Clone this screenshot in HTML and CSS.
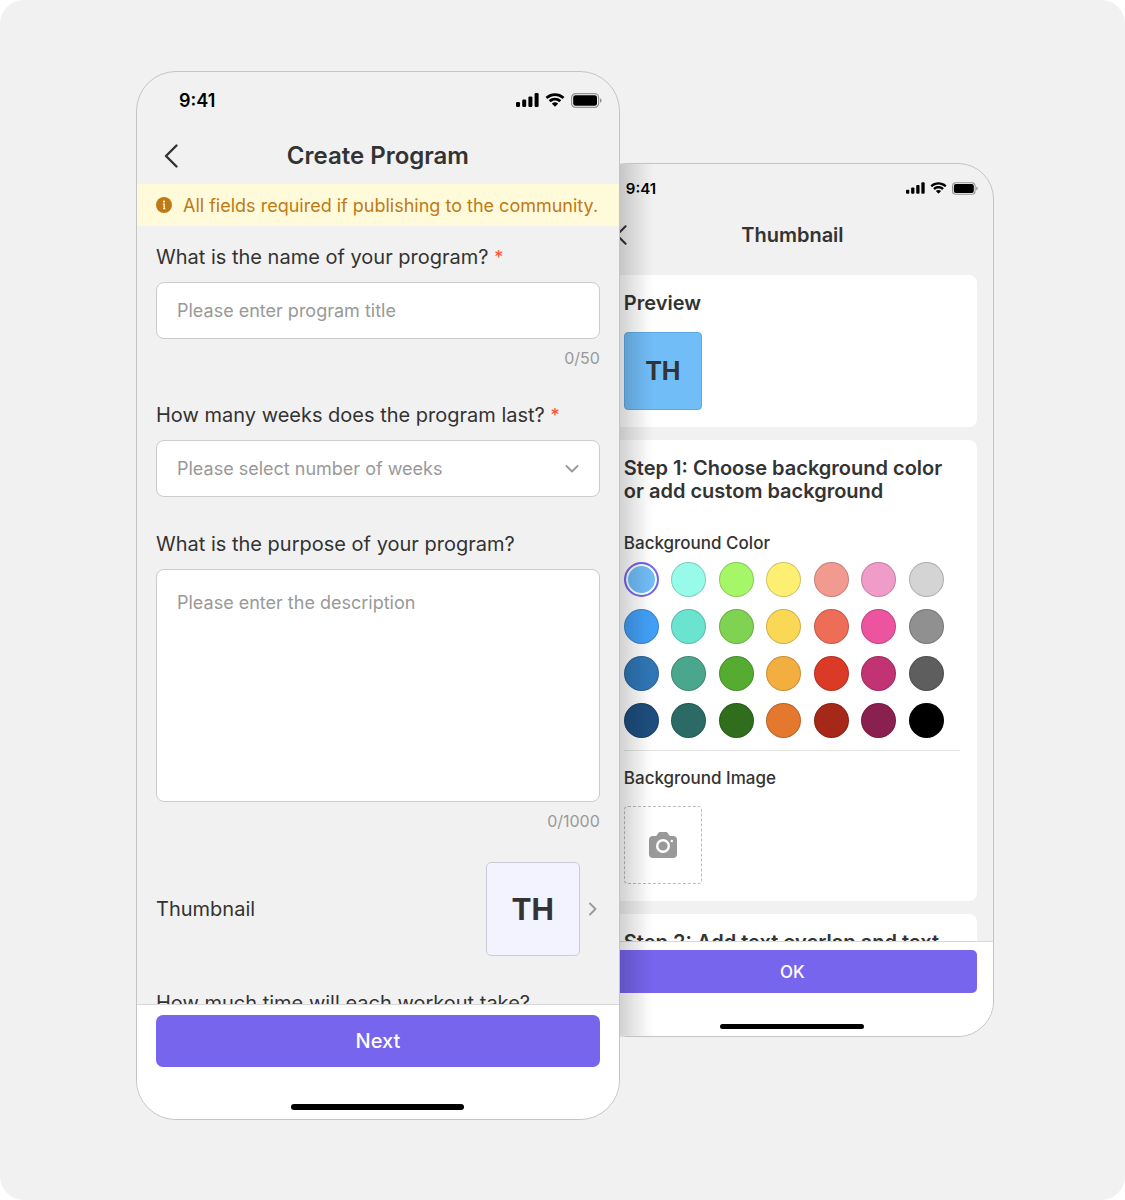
FILE: index.html
```html
<!DOCTYPE html>
<html lang="en">
<head>
<meta charset="utf-8">
<meta name="viewport" content="width=device-width, initial-scale=1">
<title>Create Program</title>
<link rel="stylesheet" href="styles.css">
</head>
<body>
<svg class="sprite" aria-hidden="true">
  <symbol id="signal" viewBox="0 0 23 14">
    <rect x="0" y="9" width="4" height="5" rx="1.2"/>
    <rect x="6.2" y="6.5" width="4" height="7.5" rx="1.2"/>
    <rect x="12.4" y="3.4" width="4" height="10.6" rx="1.2"/>
    <rect x="18.6" y="0" width="4" height="14" rx="1.2"/>
  </symbol>
  <symbol id="wifi" viewBox="0 0 20 14">
    <path d="M10 2.9c2.7 0 5.3 1 7.300 2.900.1.100.4.100.5 0l1.400-1.500c.200-.200.200-.400 0-.600C14.100-.800 5.900-.800.800 3.700c-.200.200-.200.400 0 .600l1.400 1.500c.100.100.400.100.500 0C4.700 3.900 7.300 2.900 10 2.900z"/>
    <path d="M10 7.600c1.500 0 2.900.600 4 1.500.200.200.400.200.600 0l1.400-1.500c.200-.200.200-.400 0-.600-3.400-3.100-8.600-3.100-12 0-.200.200-.200.400 0 .600l1.400 1.500c.200.200.400.200.600 0 1.100-.900 2.500-1.500 4-1.500z"/>
    <path d="M12.800 10.900c.200-.200.200-.400 0-.600-1.600-1.300-4-1.300-5.600 0-.200.200-.200.400 0 .600l2.500 2.500c.200.200.400.200.600 0z"/>
  </symbol>
  <symbol id="battery" viewBox="0 0 31 15">
    <rect x=".6" y=".6" width="27" height="13.800" rx="4" fill="none" stroke="#000" stroke-opacity=".38" stroke-width="1.200"/>
    <rect x="2.200" y="2.200" width="23.800" height="10.600" rx="2.400"/>
    <path d="M29 5.200v4.600c1-.4 1.600-1.300 1.600-2.300S30 5.600 29 5.200z" opacity=".4"/>
  </symbol>
  <symbol id="back" viewBox="0 0 14 24">
    <path d="M12.500 1.500 2 12l10.500 10.500" fill="none" stroke="#333" stroke-width="2.400" stroke-linecap="round" stroke-linejoin="round"/>
  </symbol>
</svg>

<main class="stage">
  <section class="phone phone-front">
    <div class="status">
      <span class="clock">9:41</span>
      <div class="status-icons">
        <svg class="signal"><use href="#signal"/></svg>
        <svg class="wifi"><use href="#wifi"/></svg>
        <svg class="battery"><use href="#battery"/></svg>
      </div>
    </div>
    <header class="bar">
      <button class="back" type="button" aria-label="Back"><svg><use href="#back"/></svg></button>
      <h1>Create Program</h1>
    </header>
    <div class="notice">
      <svg viewBox="0 0 16 16" aria-hidden="true">
        <circle cx="8" cy="8" r="8" fill="#be7a16"/>
        <circle cx="8" cy="4.600" r="1.100" fill="#fffada"/>
        <path d="M6.800 7.200h1.400v4.600M7 11.700h2.400" fill="none" stroke="#fffada" stroke-width="1.300"/>
      </svg>
      <p>All fields required if publishing to the community.</p>
    </div>
    <form class="scroll fields">
      <div class="field">
        <label for="title">What is the name of your program? <span class="required">*</span></label>
        <input class="control" id="title" type="text" placeholder="Please enter program title">
        <p class="counter">0/50</p>
      </div>
      <div class="field">
        <label for="weeks">How many weeks does the program last? <span class="required">*</span></label>
        <div class="select">
          <select class="control" id="weeks"><option>Please select number of weeks</option></select>
          <svg viewBox="0 0 14 8" aria-hidden="true"><path d="m1.500 1 5.500 5.500L12.500 1" fill="none" stroke="#999" stroke-width="1.800" stroke-linecap="round" stroke-linejoin="round"/></svg>
        </div>
      </div>
      <div class="field">
        <label for="purpose">What is the purpose of your program?</label>
        <textarea class="control" id="purpose" placeholder="Please enter the description"></textarea>
        <p class="counter">0/1000</p>
      </div>
      <a class="thumb-row" href="#thumbnail">
        <span class="thumb-label">Thumbnail</span>
        <span class="thumb">TH</span>
        <svg viewBox="0 0 8 14" aria-hidden="true"><path d="m1 1.500 5.500 5.500L1 12.500" fill="none" stroke="#999" stroke-width="1.800" stroke-linecap="round" stroke-linejoin="round"/></svg>
      </a>
      <p class="question">How much time will each workout take?</p>
    </form>
    <footer class="footer">
      <button class="primary" type="button">Next</button>
      <div class="home"></div>
    </footer>
  </section>

  <section class="phone phone-back" id="thumbnail">
    <div class="status">
      <span class="clock">9:41</span>
      <div class="status-icons">
        <svg class="signal"><use href="#signal"/></svg>
        <svg class="wifi"><use href="#wifi"/></svg>
        <svg class="battery"><use href="#battery"/></svg>
      </div>
    </div>
    <header class="bar">
      <button class="back" type="button" aria-label="Back"><svg><use href="#back"/></svg></button>
      <h1>Thumbnail</h1>
    </header>
    <div class="scroll cards">
      <section class="card">
        <h2>Preview</h2>
        <div class="preview">TH</div>
      </section>
      <section class="card">
        <h2>Step 1: Choose background color<br>or add custom background</h2>
        <fieldset class="colors">
          <legend>Background Color</legend>
          <div class="swatches">
            <input type="radio" name="bg" aria-label="Sky" style="--c:#71bdf7" checked>
            <input type="radio" name="bg" aria-label="Aqua" style="--c:#98fbe9">
            <input type="radio" name="bg" aria-label="Lime" style="--c:#a5f767">
            <input type="radio" name="bg" aria-label="Lemon" style="--c:#fdef72">
            <input type="radio" name="bg" aria-label="Salmon" style="--c:#f19b90">
            <input type="radio" name="bg" aria-label="Pink" style="--c:#f09cc8">
            <input type="radio" name="bg" aria-label="Silver" style="--c:#d4d4d4">
            <input type="radio" name="bg" aria-label="Blue" style="--c:#429ff6">
            <input type="radio" name="bg" aria-label="Turquoise" style="--c:#6ae3cf">
            <input type="radio" name="bg" aria-label="Green" style="--c:#80d352">
            <input type="radio" name="bg" aria-label="Yellow" style="--c:#fad856">
            <input type="radio" name="bg" aria-label="Coral" style="--c:#ed6d57">
            <input type="radio" name="bg" aria-label="Rose" style="--c:#ec549f">
            <input type="radio" name="bg" aria-label="Gray" style="--c:#909090">
            <input type="radio" name="bg" aria-label="Steel blue" style="--c:#3076b6">
            <input type="radio" name="bg" aria-label="Jade" style="--c:#4ba68e">
            <input type="radio" name="bg" aria-label="Grass" style="--c:#55ac31">
            <input type="radio" name="bg" aria-label="Amber" style="--c:#f2ae3f">
            <input type="radio" name="bg" aria-label="Red" style="--c:#db3a26">
            <input type="radio" name="bg" aria-label="Magenta" style="--c:#c23373">
            <input type="radio" name="bg" aria-label="Dark gray" style="--c:#5e5e5e">
            <input type="radio" name="bg" aria-label="Navy" style="--c:#1d4e7e">
            <input type="radio" name="bg" aria-label="Teal" style="--c:#2c6b65">
            <input type="radio" name="bg" aria-label="Forest" style="--c:#306e1d">
            <input type="radio" name="bg" aria-label="Orange" style="--c:#e4782f">
            <input type="radio" name="bg" aria-label="Brick" style="--c:#a52818">
            <input type="radio" name="bg" aria-label="Plum" style="--c:#8a2050">
            <input type="radio" name="bg" aria-label="Black" style="--c:#000">
          </div>
        </fieldset>
        <h3>Background Image</h3>
        <button class="upload" type="button" aria-label="Add background image">
          <svg viewBox="0 0 28 26" aria-hidden="true">
            <path d="M4 4h3.200L9 1.400C9.600.500 10.300 0 11.500 0h5c1.200 0 1.900.500 2.500 1.400L20.800 4H24a4 4 0 0 1 4 4v14a4 4 0 0 1-4 4H4a4 4 0 0 1-4-4V8a4 4 0 0 1 4-4z" fill="#999"/>
            <circle cx="14" cy="14" r="5.800" fill="none" stroke="#fff" stroke-width="2.400"/>
            <circle cx="22.800" cy="9" r="1.200" fill="#fff"/>
          </svg>
        </button>
      </section>
      <section class="card">
        <h2>Step 2: Add text overlap and text</h2>
      </section>
    </div>
    <footer class="footer">
      <button class="primary" type="button">OK</button>
      <div class="home"></div>
    </footer>
  </section>
</main>
</body>
</html>
```
FILE: styles.css
```css
* { box-sizing: border-box; }

body {
  margin: 0;
  background: #fff;
  color: #333;
  font-family: Inter, "Liberation Sans", sans-serif;
}

h1, h2, h3, p { margin: 0; }
button, input, select, textarea { font: inherit; }
.sprite { display: none; }

.stage {
  display: flex;
  align-items: flex-start;
  min-height: 100vh;
  padding: 71px 131px 80px 136px;
  border-radius: 24px;
  background: #f1f1f1;
}

.phone {
  position: relative;
  display: flex;
  flex-direction: column;
  min-width: 0;
  min-height: 0;
  overflow: hidden;
  border: 1px solid #c4c4c4;
  background: #f1f1f1;
}
.phone-front {
  z-index: 1;
  flex: 484 1 0;
  aspect-ratio: 484 / 1049;
  border-radius: 40px;
}
.phone-back {
  flex: 403 1 0;
  aspect-ratio: 403 / 874;
  margin: 92px 0 0 -29px;
  border-radius: 36px;
}
/* shade cast by the front phone */
.phone-back::after {
  content: "";
  position: absolute;
  inset: 0 auto 0 0;
  width: 62px;
  background: linear-gradient(to right, rgba(0, 0, 0, .18) 28px, rgba(0, 0, 0, .11) 40px, rgba(0, 0, 0, .03) 54px, transparent);
  pointer-events: none;
}

/* status bar */
.status {
  display: flex;
  flex: none;
  align-items: center;
  justify-content: space-between;
  height: 56px;
  padding: 0 17px 0 42px;
  color: #000;
  font-size: 18px;
  font-weight: 600;
}
.status-icons { display: flex; align-items: center; gap: 6px; }
.signal { width: 23px; height: 14px; }
.wifi { width: 20px; height: 14px; }
.battery { width: 31px; height: 15px; }

.phone-back .status { height: 48px; padding: 0 15px 0 34px; font-size: 15px; }
.phone-back .status-icons { gap: 5px; }
.phone-back .signal { width: 19px; height: 12px; }
.phone-back .wifi { width: 17px; height: 12px; }
.phone-back .battery { width: 26px; height: 13px; }

/* title bar */
.bar {
  display: grid;
  flex: none;
  grid-template-columns: 49px 1fr 49px;
  align-items: center;
  height: 56px;
}
.bar h1 {
  font-size: 24px;
  font-weight: 600;
  line-height: 28px;
  text-align: center;
}
.back {
  display: flex;
  justify-content: flex-end;
  padding: 0 8px 0 0;
  border: 0;
  background: none;
}
.back svg { width: 14px; height: 24px; }
.phone-back .bar { grid-template-columns: 40px 1fr 40px; height: 45px; }
.phone-back .bar h1 { font-size: 20px; line-height: 24px; }
.phone-back .back { padding-right: 5px; }
.phone-back .back svg { width: 12px; height: 20px; }

.notice {
  display: flex;
  flex: none;
  align-items: center;
  gap: 11px;
  height: 42px;
  padding: 0 19px;
  background: #fffada;
  color: #be7a16;
  font-size: 18px;
  white-space: nowrap;
}
.notice svg { flex: none; width: 16px; height: 16px; }

.scroll { flex: 1; min-height: 0; overflow: hidden; }

/* form */
.fields {
  display: flex;
  flex-direction: column;
  gap: 35px;
  padding: 19px 19px 0;
}
.field { display: flex; flex: none; flex-direction: column; }
.field label, .thumb-label, .question {
  font-size: 20px;
  line-height: 24px;
  white-space: nowrap;
}
.field label { margin-bottom: 13px; }
.required { color: #ff4d35; font-size: 18px; line-height: 1; }
.control {
  width: 100%;
  height: 57px;
  padding: 0 20px;
  border: 1px solid #ccc;
  border-radius: 8px;
  background: #fff;
  color: #999;
  font-size: 18px;
  outline: 0;
}
.control::placeholder { color: #999; opacity: 1; }
textarea.control {
  display: block;
  height: 233px;
  padding: 22px 20px;
  line-height: 22px;
  resize: none;
}
.select { display: grid; align-items: center; }
.select > * { grid-area: 1 / 1; }
.select select { appearance: none; }
.select svg {
  justify-self: end;
  width: 14px;
  height: 8px;
  margin-right: 21px;
  pointer-events: none;
}
.counter {
  margin-top: 9px;
  color: #999;
  font-size: 16px;
  line-height: 20px;
  text-align: right;
}
.thumb-row {
  display: flex;
  flex: none;
  align-items: center;
  gap: 9px;
  margin-top: -4px;
  padding-right: 3px;
  color: inherit;
  text-decoration: none;
}
.thumb-label { flex: 1; }
.thumb {
  display: grid;
  place-items: center;
  width: 94px;
  height: 94px;
  border: 1px solid #ccccd8;
  border-radius: 5px;
  background: #f3f2ff;
  font-size: 30px;
  font-weight: 700;
}
.thumb-row svg { width: 8px; height: 14px; }

/* cards */
.cards {
  display: flex;
  flex-direction: column;
  gap: 13px;
  padding: 18px 16px 0;
}
.card {
  flex: none;
  padding: 17px 17px 17px 16px;
  border-radius: 8px;
  background: #fff;
}
.card h2 {
  font-size: 20px;
  font-weight: 600;
  line-height: 23px;
  white-space: nowrap;
}
.preview {
  display: grid;
  place-items: center;
  width: 78px;
  height: 78px;
  margin-top: 17px;
  border: 1px solid #5fa9e2;
  border-radius: 4px;
  background: #71bdf7;
  font-size: 25px;
  font-weight: 700;
}
.colors {
  min-width: 0;
  margin: 30px 0 0;
  padding: 0 0 12px;
  border: 0;
  border-bottom: 1px solid #e4e4e4;
}
.colors legend, .card h3 {
  padding: 0;
  font-size: 17px;
  font-weight: 500;
  line-height: 20px;
}
.swatches {
  display: grid;
  grid-template-columns: repeat(7, 35px);
  justify-content: space-between;
  row-gap: 12px;
  margin-top: 9px;
  padding-right: 16px;
}
.swatches input {
  appearance: none;
  width: 35px;
  height: 35px;
  margin: 0;
  border: 1px solid rgba(0, 0, 0, .18);
  border-radius: 50%;
  background: var(--c);
}
.swatches input:checked {
  border: 2px solid #7765ee;
  box-shadow: inset 0 0 0 2px #fff;
}
.card h3 { margin-top: 17px; }
.upload {
  display: grid;
  place-items: center;
  width: 78px;
  height: 78px;
  margin-top: 18px;
  padding: 0;
  border: 1px dashed #bbb;
  border-radius: 4px;
  background: none;
}
.upload svg { width: 28px; height: 26px; }

/* bottom bar */
.footer {
  flex: none;
  padding: 10px 19px 9px;
  border-top: 1px solid #d8d8d8;
  background: #fff;
}
.primary {
  display: block;
  width: 100%;
  height: 52px;
  padding: 0;
  border: 0;
  border-radius: 7px;
  background: #7765ee;
  color: #fff;
  font-size: 20px;
  font-weight: 500;
}
.home {
  width: 39%;
  height: 6px;
  margin: 37px auto 0;
  border-radius: 3px;
  background: #000;
}
.phone-back .footer { padding: 8px 16px 7px; }
.phone-back .primary { height: 43px; border-radius: 5px; font-size: 17px; }
.phone-back .home { height: 5px; margin-top: 31px; }
```
